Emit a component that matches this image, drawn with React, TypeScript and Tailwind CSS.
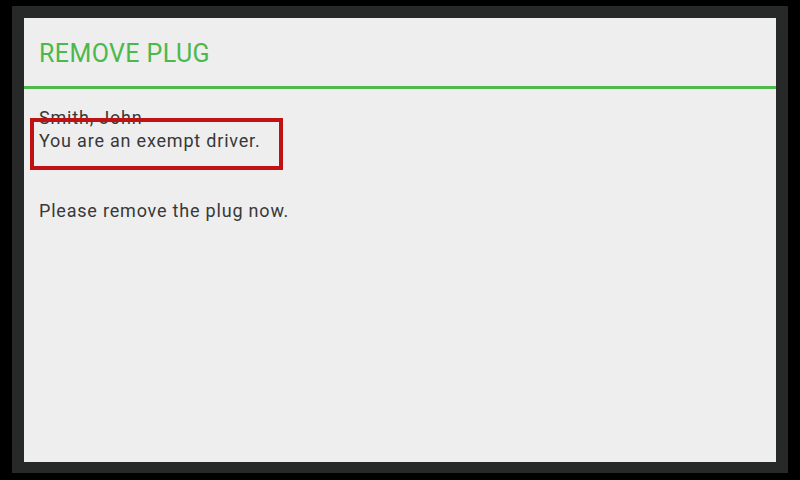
export default function App() {
  return (
    <div className="h-[480px] w-[800px] bg-black pl-3 pr-3 pt-[6px] pb-[7px]">
      <div className="h-full w-full bg-[#262927] px-3 pt-3 pb-[11px]">
        <div className="relative flex h-full w-full flex-col bg-[#eeeeee] font-['Roboto',sans-serif]">
          <div className="flex h-[68px] items-center px-[15px] pt-[3px] text-[25px] tracking-[0.4px] text-[#4cb84c]">REMOVE PLUG</div>
          <div className="h-[3px] bg-[#4cbb4c]" />
          <div className="px-[15px] pt-[17px] text-[18px] leading-[23.3px] tracking-[0.8px] text-[#383838]">
            <p>Smith, John</p>
            <p>You are an exempt driver.</p>
            <p>&nbsp;</p>
            <p>&nbsp;</p>
            <p>Please remove the plug now.</p>
          </div>
          {/* highlight around the exemption line */}
          <div className="absolute left-[6px] top-[100px] h-[52px] w-[253px] border-4 border-[#c01212]" />
        </div>
      </div>
    </div>
  )
}
